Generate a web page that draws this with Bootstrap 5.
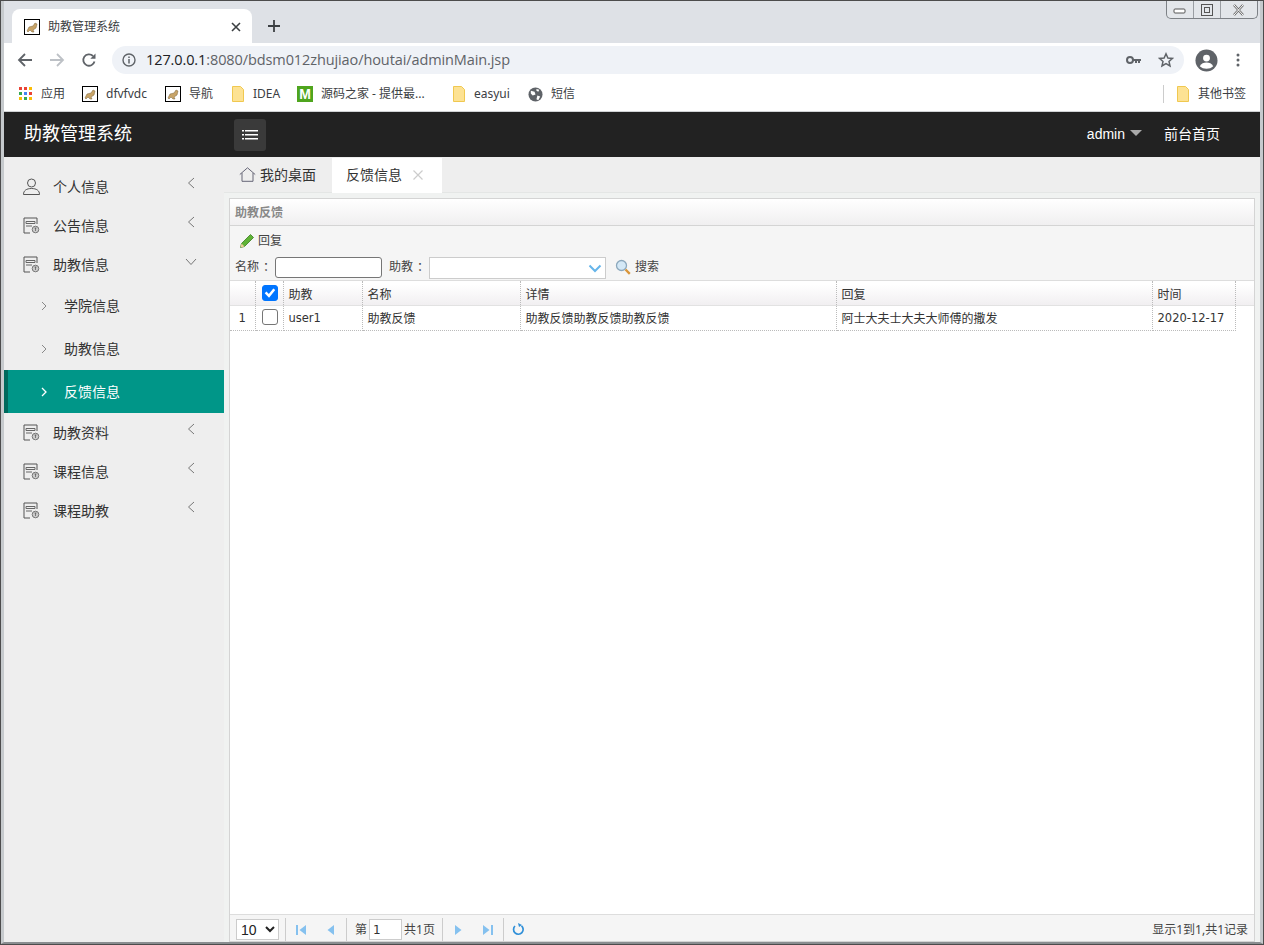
<!DOCTYPE html>
<html lang="zh"><head><meta charset="utf-8"><title>助教管理系统</title>
<link href="https://cdn.jsdelivr.net/npm/bootstrap@5.3.0/dist/css/bootstrap.min.css" rel="stylesheet">
<style>
html,body{margin:0;height:945px;overflow:hidden}
body{font-family:"Noto Sans","Noto Sans CJK SC",sans-serif;font-size:12px;color:#333;background:#eee}
.win{height:945px;border:1px solid #4c4c4c;position:relative;display:flex;flex-direction:column;overflow:hidden}
.frame{flex:1;min-height:0;display:flex;flex-direction:column;border-left:3px solid #c6cacd;border-right:3px solid #c6cacd;border-bottom:2px solid #8a8d90}
.tabstrip{height:42px;background:#dee1e6;display:flex;align-items:flex-end;padding-left:8px;flex:none}
.btab{width:240px;height:34px;background:#fff;border-radius:8px 8px 0 0;display:flex;align-items:center;padding:1px 11px 0 12px;gap:8px;color:#3c4043;font-size:12px}
.btab .tt{flex:1}
.newtab{width:44px;height:34px;display:flex;align-items:center;justify-content:center}
.wctl{position:absolute;top:0;right:5px;width:92px;height:18px;border:1px solid #7d8186;border-top:0;border-radius:0 0 5px 5px;background:#e3e6ea;display:flex}
.wctl span{flex:1;display:flex;align-items:center;justify-content:center;border-right:1px solid #9a9ea3}
.wctl span:last-child{border-right:0;flex:1.4}
.tbar{height:34px;background:#fff;display:flex;align-items:center;flex:none;padding-left:5px}
.navic{width:32px;display:flex;justify-content:center}
.omni{margin-left:7px;width:1072px;height:28px;background:#eff2f7;border-radius:14px;display:flex;align-items:center;padding:0 10px;color:#5f6368;font-size:14.5px;font-family:"Open Sans",sans-serif;letter-spacing:-.1px}
.omni b{font-weight:400;color:#202124}
.omni .grow{flex:1;margin-left:10px}
.bmbar{background:#fff;display:flex;align-items:center;flex:none;font-size:12px;color:#3c4043;border-bottom:1px solid #d0d2d4;padding:1px 0 1px 15px;box-sizing:content-box;height:32px}
.bm{display:flex;align-items:center;gap:8px;white-space:nowrap}
.mlogo{width:16px;height:16px;background:#4fa51e;color:#fff;font:700 14px/16px "Liberation Sans",sans-serif;text-align:center}
.sysbar{height:45px;background:#222;color:#fff;padding:0;flex:none;flex-wrap:nowrap;justify-content:flex-start;align-items:center}
.brandt{width:230px;padding-left:20px;font-size:18px;line-height:24px;margin-top:-3px}
.menubtn{width:32px;height:32px;background:#3a3a3a;border-radius:3px;border:0;padding:0;display:flex;align-items:center;justify-content:center}
.adminl{font-size:14px;font-family:"Liberation Sans",sans-serif;color:#fff;display:flex;align-items:center;gap:5px;margin-left:-1px}
.adminl i{display:block;width:0;height:0;border:6px solid transparent;border-top:6px solid #aaa;border-bottom:0;margin-top:-3px}
.topl{font-size:14px;color:#fff;margin:-2px 40px 0 22px}
.mainw{flex:1;min-height:0;display:flex}
.side{width:220px;flex:none;background:#eee;padding-top:10px;border:0}
.side .list-group-item{background:transparent;border:0;border-radius:0;padding:0;color:#333;font-size:14px;display:flex;align-items:center}
.lv1{height:39px;padding-left:19px!important;gap:13px}
.lv1 .ar{margin-left:auto;margin-right:29px;margin-top:-7px}
.lv1 .ar.dn{margin-right:27px;margin-top:-6px}
.lv2{height:43px;padding-left:37px!important;gap:17px}
.lv2.on,.side .lv2.on{background:#009688;color:#fff;border-left:4px solid #00695c;padding-left:33px!important}
.rightc{flex:1;min-width:0;display:flex;flex-direction:column;background:#f0f2f1}
.ptabs{height:36px;background:#eee;border-bottom:1px solid #e4e6e5;display:flex;align-items:flex-end;flex:none;font-size:14px}
.ptab{display:flex;align-items:center;height:34px}
.ptab.home{padding-left:15px;padding-right:16px;gap:4px;height:36px}
.ptab.cur{width:110px;background:#fff;padding-left:14px;padding-bottom:2px;gap:11px;margin-bottom:-1px;height:35px}
.panelw{flex:1;min-height:0;margin:5px 5px 0 5px;border:1px solid #d4d4d4;background:#fff;display:flex;flex-direction:column}
.ptitle{height:27px;background:linear-gradient(#fff,#f0eff0);border-bottom:1px solid #d4d4d4;padding-left:5px;padding-top:1px;line-height:26px;font-weight:700;color:#888;flex:none}
.tools{height:54px;background:#f5f5f5;flex:none;color:#444}
.trow1{height:28px;padding-top:1px;display:flex;align-items:center;padding-left:9px;gap:3px}
.trow2{height:26px;display:flex;align-items:center;padding-left:5px}
.cl{display:inline-block;margin-left:4px;margin-right:-4px}
.inp1{width:107px;height:21px;border:1px solid #767676;border-radius:3px;background:#fff;padding:0 4px;margin-left:4px;font-size:12px;box-shadow:none;min-height:0}
.inp2{width:177px;height:22px;border:1px solid #ccc;background:#fff;display:flex;align-items:center;justify-content:flex-end;padding-right:3px;margin-top:2px}
.grid-h{background:linear-gradient(#fff 15%,#f1eff1);border-top:1px solid #ddd;border-bottom:1px solid #e2e2e2;flex:none}
.dg{table-layout:fixed;width:1005px;border-collapse:collapse;font-size:12px;color:#333;margin:0}
.dg td{padding:0 4px 0 5px;border-right:1px dotted #bbb;white-space:nowrap;overflow:hidden;height:24px}
.grid-h .dg td{height:24px;padding-top:3px;vertical-align:middle}
.gridb .dg td{padding-top:2px}
.grid-h .dg td.cen{padding-top:0}
.gridb .dg td.chk{padding-top:0}
.dg td.cen{text-align:center;padding-left:0;padding-right:0}
.dg .bb td{border-bottom:1px dotted #bbb}
.form-check-input.cb{width:16px;height:16px;margin:0;border-radius:3px;border:1px solid #767676;display:block;float:none;margin-left:6px;margin-top:-1px}
.form-check-input.cb:checked{background-color:#0075ff;border-color:#0075ff;background-image:url("data:image/svg+xml,%3csvg xmlns='http://www.w3.org/2000/svg' viewBox='0 0 20 20'%3e%3cpath fill='none' stroke='%23fff' stroke-linecap='square' stroke-width='3.600' d='M5 10.500l3.500 3.500L15 6'/%3e%3c/svg%3e")}
.latn{font-family:"DejaVu Sans",sans-serif;font-size:11.5px}
.gridb{flex:1;min-height:0;background:#fff}
.pager{height:27px;flex:none;background:#f5f5f5;border-top:1px solid #ddd;display:flex;align-items:center;padding-left:6px;padding-top:3px;color:#444}
.psel{width:43px;height:21px;border:1px solid #ccc;background:#fff;padding:0;font-size:14px;font-family:"Liberation Sans",sans-serif;color:#222;border-radius:0;margin-right:6px;flex:none}
.sep{width:1px;height:23px;background:#ccc;flex:none}
.pb{width:30px;display:flex;justify-content:center;flex:none}
.pinp{width:33px;height:21px;border:1px solid #ccc;background:#fff;font-family:"DejaVu Sans",sans-serif;padding:0 3px;font-size:12px;color:#333;border-radius:0;min-height:0;line-height:1}
.pinfo{margin-left:auto;margin-right:6px}
</style></head><body>
<div class="win">
<div class="wctl">
<span><svg width="14" height="8"><rect x="1" y="3" width="11" height="4" rx="1" fill="#fff" stroke="#555"/></svg></span>
<span><svg width="12" height="12"><rect x=".5" y=".5" width="11" height="11" fill="none" stroke="#555"/><rect x="3.5" y="3.5" width="5" height="5" fill="none" stroke="#555"/></svg></span>
<span><svg width="13" height="12"><path d="M2 1l9 10M11 1L2 11" stroke="#666" stroke-width="2.4"/><path d="M2 1l9 10M11 1L2 11" stroke="#fff" stroke-width="1"/></svg></span>
</div>
<div class="frame">
<div class="tabstrip">
<div class="btab"><svg width="16" height="16"><rect x=".5" y=".5" width="15" height="15" fill="#fff" stroke="#000"/><path d="M3 12l2-4 4-1 2-3 2 1-1 4-3 2 1 2H8l-2-2-2 2z" fill="#c8a468" stroke="#7a6238" stroke-width=".5"/></svg><span class="tt">助教管理系统</span>
<svg width="10" height="10" viewBox="0 0 10 10"><path d="M1 1l8 8M9 1l-8 8" stroke="#3c4043" stroke-width="1.6"/></svg></div>
<div class="newtab"><svg width="14" height="14"><path d="M7 1v12M1 7h12" stroke="#3c4043" stroke-width="1.8"/></svg></div>
</div>
<div class="tbar">
<div class="navic"><svg width="16" height="16"><path d="M15 8H2M8 2L2 8l6 6" fill="none" stroke="#5f6368" stroke-width="1.8"/></svg></div>
<div class="navic"><svg width="16" height="16"><path d="M1 8h13M8 2l6 6-6 6" fill="none" stroke="#bdc1c6" stroke-width="1.8"/></svg></div>
<div class="navic"><svg width="16" height="16" viewBox="0 0 16 16"><path d="M13.5 9.5A5.7 5.7 0 1 1 12 4" fill="none" stroke="#5f6368" stroke-width="1.8"/><path d="M14.5 1.5v5.2H9.3z" fill="#5f6368"/></svg></div>
<div class="omni"><svg width="14" height="14" viewBox="0 0 14 14"><circle cx="7" cy="7" r="6" fill="none" stroke="#5f6368" stroke-width="1.4"/><path d="M7 6v4.4M7 3.4v1.5" stroke="#5f6368" stroke-width="1.5"/></svg><span class="grow"><b>127.0.0.1</b>:8080/bdsm012zhujiao/houtai/adminMain.jsp</span>
<svg width="16" height="10" viewBox="0 0 16 10"><circle cx="4" cy="5" r="3" fill="none" stroke="#5f6368" stroke-width="2"/><path d="M7 4h8v2h-1v2h-2V6h-1v2H9V6H7z" fill="#5f6368"/></svg>
<svg class="ms-3" width="16" height="16" viewBox="0 0 16 16"><path d="M8 1.8l1.9 4.2 4.5.4-3.4 3 1 4.5L8 11.5l-4 2.4 1-4.5-3.4-3 4.5-.4z" fill="none" stroke="#5f6368" stroke-width="1.5"/></svg></div>
<svg style="margin-left:11px" width="23" height="23" viewBox="0 0 24 24"><circle cx="12" cy="12" r="11.5" fill="#5f6368"/><circle cx="12" cy="9.5" r="3.6" fill="#fff"/><path d="M5 18c1.5-3 4-4 7-4s5.500 1 7 4c-3.500 3.500-10.500 3.500-14 0z" fill="#fff"/></svg>
<svg style="margin-left:18px" width="4" height="16"><circle cx="2" cy="3" r="1.500" fill="#5f6368"/><circle cx="2" cy="8" r="1.500" fill="#5f6368"/><circle cx="2" cy="13" r="1.500" fill="#5f6368"/></svg>
</div>
<div class="bmbar">
<div class="bm" style="width:63px"><svg width="14" height="14" viewBox="0 0 14 14"><g><rect x="0" y="0" width="3" height="3" fill="#ea4335"/><rect x="5" y="0" width="3" height="3" fill="#ea4335"/><rect x="10" y="0" width="3" height="3" fill="#fbbc05"/><rect x="0" y="5" width="3" height="3" fill="#34a853"/><rect x="5" y="5" width="3" height="3" fill="#4285f4"/><rect x="10" y="5" width="3" height="3" fill="#ea4335"/><rect x="0" y="10" width="3" height="3" fill="#fbbc05"/><rect x="5" y="10" width="3" height="3" fill="#34a853"/><rect x="10" y="10" width="3" height="3" fill="#fbbc05"/></g></svg><span>应用</span></div>
<div class="bm" style="width:83px"><svg width="16" height="16"><rect x=".5" y=".5" width="15" height="15" fill="#fff" stroke="#000"/><path d="M3 12l2-4 4-1 2-3 2 1-1 4-3 2 1 2H8l-2-2-2 2z" fill="#c8a468" stroke="#7a6238" stroke-width=".5"/></svg><span>dfvfvdc</span></div>
<div class="bm" style="width:66px"><svg width="16" height="16"><rect x=".5" y=".5" width="15" height="15" fill="#fff" stroke="#000"/><path d="M3 12l2-4 4-1 2-3 2 1-1 4-3 2 1 2H8l-2-2-2 2z" fill="#c8a468" stroke="#7a6238" stroke-width=".5"/></svg><span>导航</span></div>
<div class="bm" style="width:66px"><svg width="14" height="16"><path d="M1.500.500h8l3 3v12h-11z" fill="#fde293" stroke="#f0c850"/></svg><span>IDEA</span></div>
<div class="bm" style="width:155px"><div class="mlogo">M</div><span>源码之家 - 提供最...</span></div>
<div class="bm" style="width:76px"><svg width="14" height="16"><path d="M1.500.500h8l3 3v12h-11z" fill="#fde293" stroke="#f0c850"/></svg><span>easyui</span></div>
<div class="bm ms-0"><svg width="15" height="15" viewBox="0 0 16 16"><circle cx="8" cy="8" r="7.500" fill="#5f6368"/><path d="M3 4l4 1 1 3-3 1-2-2zM10 9l3 1-2 4-2-1zM9 2l3 1-1 2-2-1z" fill="#fff"/></svg><span>短信</span></div>
<div class="bm ms-auto" style="border-left:1px solid #ccc;padding-left:12px;margin-right:14px;height:18px"><svg width="14" height="16"><path d="M1.500.500h8l3 3v12h-11z" fill="#fde293" stroke="#f0c850"/></svg><span>其他书签</span></div>
</div>
<nav class="navbar sysbar">
<div class="brandt">助教管理系统</div>
<button class="menubtn" type="button" aria-label="menu"><svg width="16" height="12"><g fill="#fff"><rect x="0" y="1" width="2" height="1.500"/><rect x="3" y="1" width="13" height="1.500"/><rect x="0" y="5" width="2" height="1.500"/><rect x="3" y="5" width="13" height="1.500"/><rect x="0" y="9" width="2" height="1.500"/><rect x="3" y="9" width="13" height="1.500"/></g></svg></button>
<div class="ms-auto d-flex align-items-center"><span class="adminl">admin<i></i></span><span class="topl">前台首页</span></div>
</nav>
<div class="mainw">
<div class="side list-group">
<div class="list-group-item lv1"><svg width="17" height="17" viewBox="0 0 17 17"><circle cx="8.500" cy="5" r="4" fill="none" stroke="#555"/><path d="M.5 16.500c0-4 3-6 8-6s8 2 8 6z" fill="none" stroke="#555"/></svg><span>个人信息</span><svg class="ar" width="8" height="12"><path d="M7 1L1.500 6 7 11" fill="none" stroke="#777"/></svg></div>
<div class="list-group-item lv1"><svg width="17" height="17" viewBox="0 0 17 17"><path d="M14 7V1H1v15h6" fill="none" stroke="#555"/><path d="M3 4.500h9v2H3zM3 9h6" fill="none" stroke="#666"/><circle cx="12.500" cy="12.500" r="3.300" fill="#ccc" stroke="#777"/><path d="M12.500 11v3M11.500 11h2" stroke="#555" stroke-width=".7"/></svg><span>公告信息</span><svg class="ar" width="8" height="12"><path d="M7 1L1.500 6 7 11" fill="none" stroke="#777"/></svg></div>
<div class="list-group-item lv1"><svg width="17" height="17" viewBox="0 0 17 17"><path d="M14 7V1H1v15h6" fill="none" stroke="#555"/><path d="M3 4.500h9v2H3zM3 9h6" fill="none" stroke="#666"/><circle cx="12.500" cy="12.500" r="3.300" fill="#ccc" stroke="#777"/><path d="M12.500 11v3M11.500 11h2" stroke="#555" stroke-width=".7"/></svg><span>助教信息</span><svg class="ar dn" width="12" height="8"><path d="M1 1l5 5.500L11 1" fill="none" stroke="#777"/></svg></div>
<div class="list-group-item lv2"><svg width="6" height="10"><path d="M1 1l4 4-4 4" fill="none" stroke="#888"/></svg><span>学院信息</span></div>
<div class="list-group-item lv2"><svg width="6" height="10"><path d="M1 1l4 4-4 4" fill="none" stroke="#888"/></svg><span>助教信息</span></div>
<div class="list-group-item lv2 on"><svg width="6" height="10"><path d="M1 1l4 4-4 4" fill="none" stroke="#fff" stroke-width="1.300"/></svg><span>反馈信息</span></div>
<div class="list-group-item lv1"><svg width="17" height="17" viewBox="0 0 17 17"><path d="M14 7V1H1v15h6" fill="none" stroke="#555"/><path d="M3 4.500h9v2H3zM3 9h6" fill="none" stroke="#666"/><circle cx="12.500" cy="12.500" r="3.300" fill="#ccc" stroke="#777"/><path d="M12.500 11v3M11.500 11h2" stroke="#555" stroke-width=".7"/></svg><span>助教资料</span><svg class="ar" width="8" height="12"><path d="M7 1L1.500 6 7 11" fill="none" stroke="#777"/></svg></div>
<div class="list-group-item lv1"><svg width="17" height="17" viewBox="0 0 17 17"><path d="M14 7V1H1v15h6" fill="none" stroke="#555"/><path d="M3 4.500h9v2H3zM3 9h6" fill="none" stroke="#666"/><circle cx="12.500" cy="12.500" r="3.300" fill="#ccc" stroke="#777"/><path d="M12.500 11v3M11.500 11h2" stroke="#555" stroke-width=".7"/></svg><span>课程信息</span><svg class="ar" width="8" height="12"><path d="M7 1L1.500 6 7 11" fill="none" stroke="#777"/></svg></div>
<div class="list-group-item lv1"><svg width="17" height="17" viewBox="0 0 17 17"><path d="M14 7V1H1v15h6" fill="none" stroke="#555"/><path d="M3 4.500h9v2H3zM3 9h6" fill="none" stroke="#666"/><circle cx="12.500" cy="12.500" r="3.300" fill="#ccc" stroke="#777"/><path d="M12.500 11v3M11.500 11h2" stroke="#555" stroke-width=".7"/></svg><span>课程助教</span><svg class="ar" width="8" height="12"><path d="M7 1L1.500 6 7 11" fill="none" stroke="#777"/></svg></div>
</div>
<div class="rightc">
<div class="ptabs">
<div class="ptab home"><svg width="17" height="15" viewBox="0 0 17 15"><path d="M.8 7.500L8.500.8l7.700 6.700M3 6v8.300h11V6" fill="none" stroke="#667"/></svg><span>我的桌面</span></div>
<div class="ptab cur"><span>反馈信息</span><svg width="10" height="10"><path d="M.5.500l9 9M9.500.500l-9 9" stroke="#ccc" stroke-width="1.200"/></svg></div>
</div>
<div class="panelw">
<div class="ptitle">助教反馈</div>
<div class="tools">
<div class="trow1"><svg width="16" height="16" viewBox="0 0 16 16"><path d="M1.500 14.500l1-4L11.500 1.500l3 3-9 9z" fill="#5fb336" stroke="#3a7d1e" stroke-width=".8"/><path d="M1.500 14.500l1-4 3 3z" fill="#eecf9a"/></svg><span>回复</span></div>
<div class="trow2"><span>名称<span class="cl">：</span></span><input class="form-control inp1" type="text"><span style="margin:0 4px 0 7px">助教<span class="cl">：</span></span><div class="inp2"><svg width="14" height="9"><path d="M1.500 1.500L7 7l5.500-5.500" fill="none" stroke="#66b5ea" stroke-width="2"/></svg></div>
<svg style="margin-left:9px" width="16" height="16" viewBox="0 0 16 16"><circle cx="6.500" cy="6.500" r="5" fill="#d4e8f6" stroke="#8ca8bd" stroke-width="1.300"/><path d="M10.500 10.500l4.300 4.300" stroke="#d9953a" stroke-width="2.400"/></svg><span style="margin-left:4px">搜索</span></div>
</div>
<div class="grid-h"><table class="dg"><colgroup><col style="width:25px"><col style="width:28px"><col style="width:79px"><col style="width:158px"><col style="width:316px"><col style="width:316px"><col style="width:83px"></colgroup>
<tr><td></td><td class="cen"><input class="form-check-input cb" type="checkbox" checked aria-label="all"></td><td>助教</td><td>名称</td><td>详情</td><td>回复</td><td>时间</td></tr></table></div>
<div class="gridb"><table class="dg"><colgroup><col style="width:25px"><col style="width:28px"><col style="width:79px"><col style="width:158px"><col style="width:316px"><col style="width:316px"><col style="width:83px"></colgroup>
<tr class="bb"><td class="cen latn">1</td><td class="cen chk"><input class="form-check-input cb" type="checkbox" aria-label="row"></td><td class="latn">user1</td><td>助教反馈</td><td>助教反馈助教反馈助教反馈</td><td>阿士大夫士大夫大师傅的撒发</td><td class="latn">2020-12-17</td></tr></table></div>
<div class="pager">
<select class="psel" aria-label="size"><option>10</option></select><div class="sep"></div>
<div class="pb"><svg width="12" height="12"><path d="M1 1h2v10H1zM11 1v10L4.500 6z" fill="#85c1ef"/></svg></div>
<div class="pb"><svg width="10" height="12"><path d="M8 1v10L1.500 6z" fill="#85c1ef"/></svg></div>
<div class="sep"></div>
<span style="margin:0 2px 0 8px">第</span><input class="form-control pinp" type="text" value="1"><span style="margin-left:2px;margin-right:7px">共1页</span>
<div class="sep"></div>
<div class="pb"><svg width="10" height="12"><path d="M2 1v10L8.500 6z" fill="#85c1ef"/></svg></div>
<div class="pb"><svg width="12" height="12"><path d="M1 1v10L7.500 6zM9 1h2v10H9z" fill="#85c1ef"/></svg></div>
<div class="sep"></div>
<div class="pb"><svg width="13" height="13" viewBox="0 0 13 13"><path d="M9.500 2.800A4.800 4.800 0 1 1 3 3" fill="none" stroke="#2f8fd8" stroke-width="1.700"/><path d="M6 0l1 4 3-2z" fill="#2f8fd8"/></svg></div>
<span class="pinfo">显示1到1,共1记录</span>
</div>
</div>
</div>
</div>
</div>
</div>
<script src="https://cdn.jsdelivr.net/npm/bootstrap@5.3.0/dist/js/bootstrap.bundle.min.js"></script>
</body></html>
